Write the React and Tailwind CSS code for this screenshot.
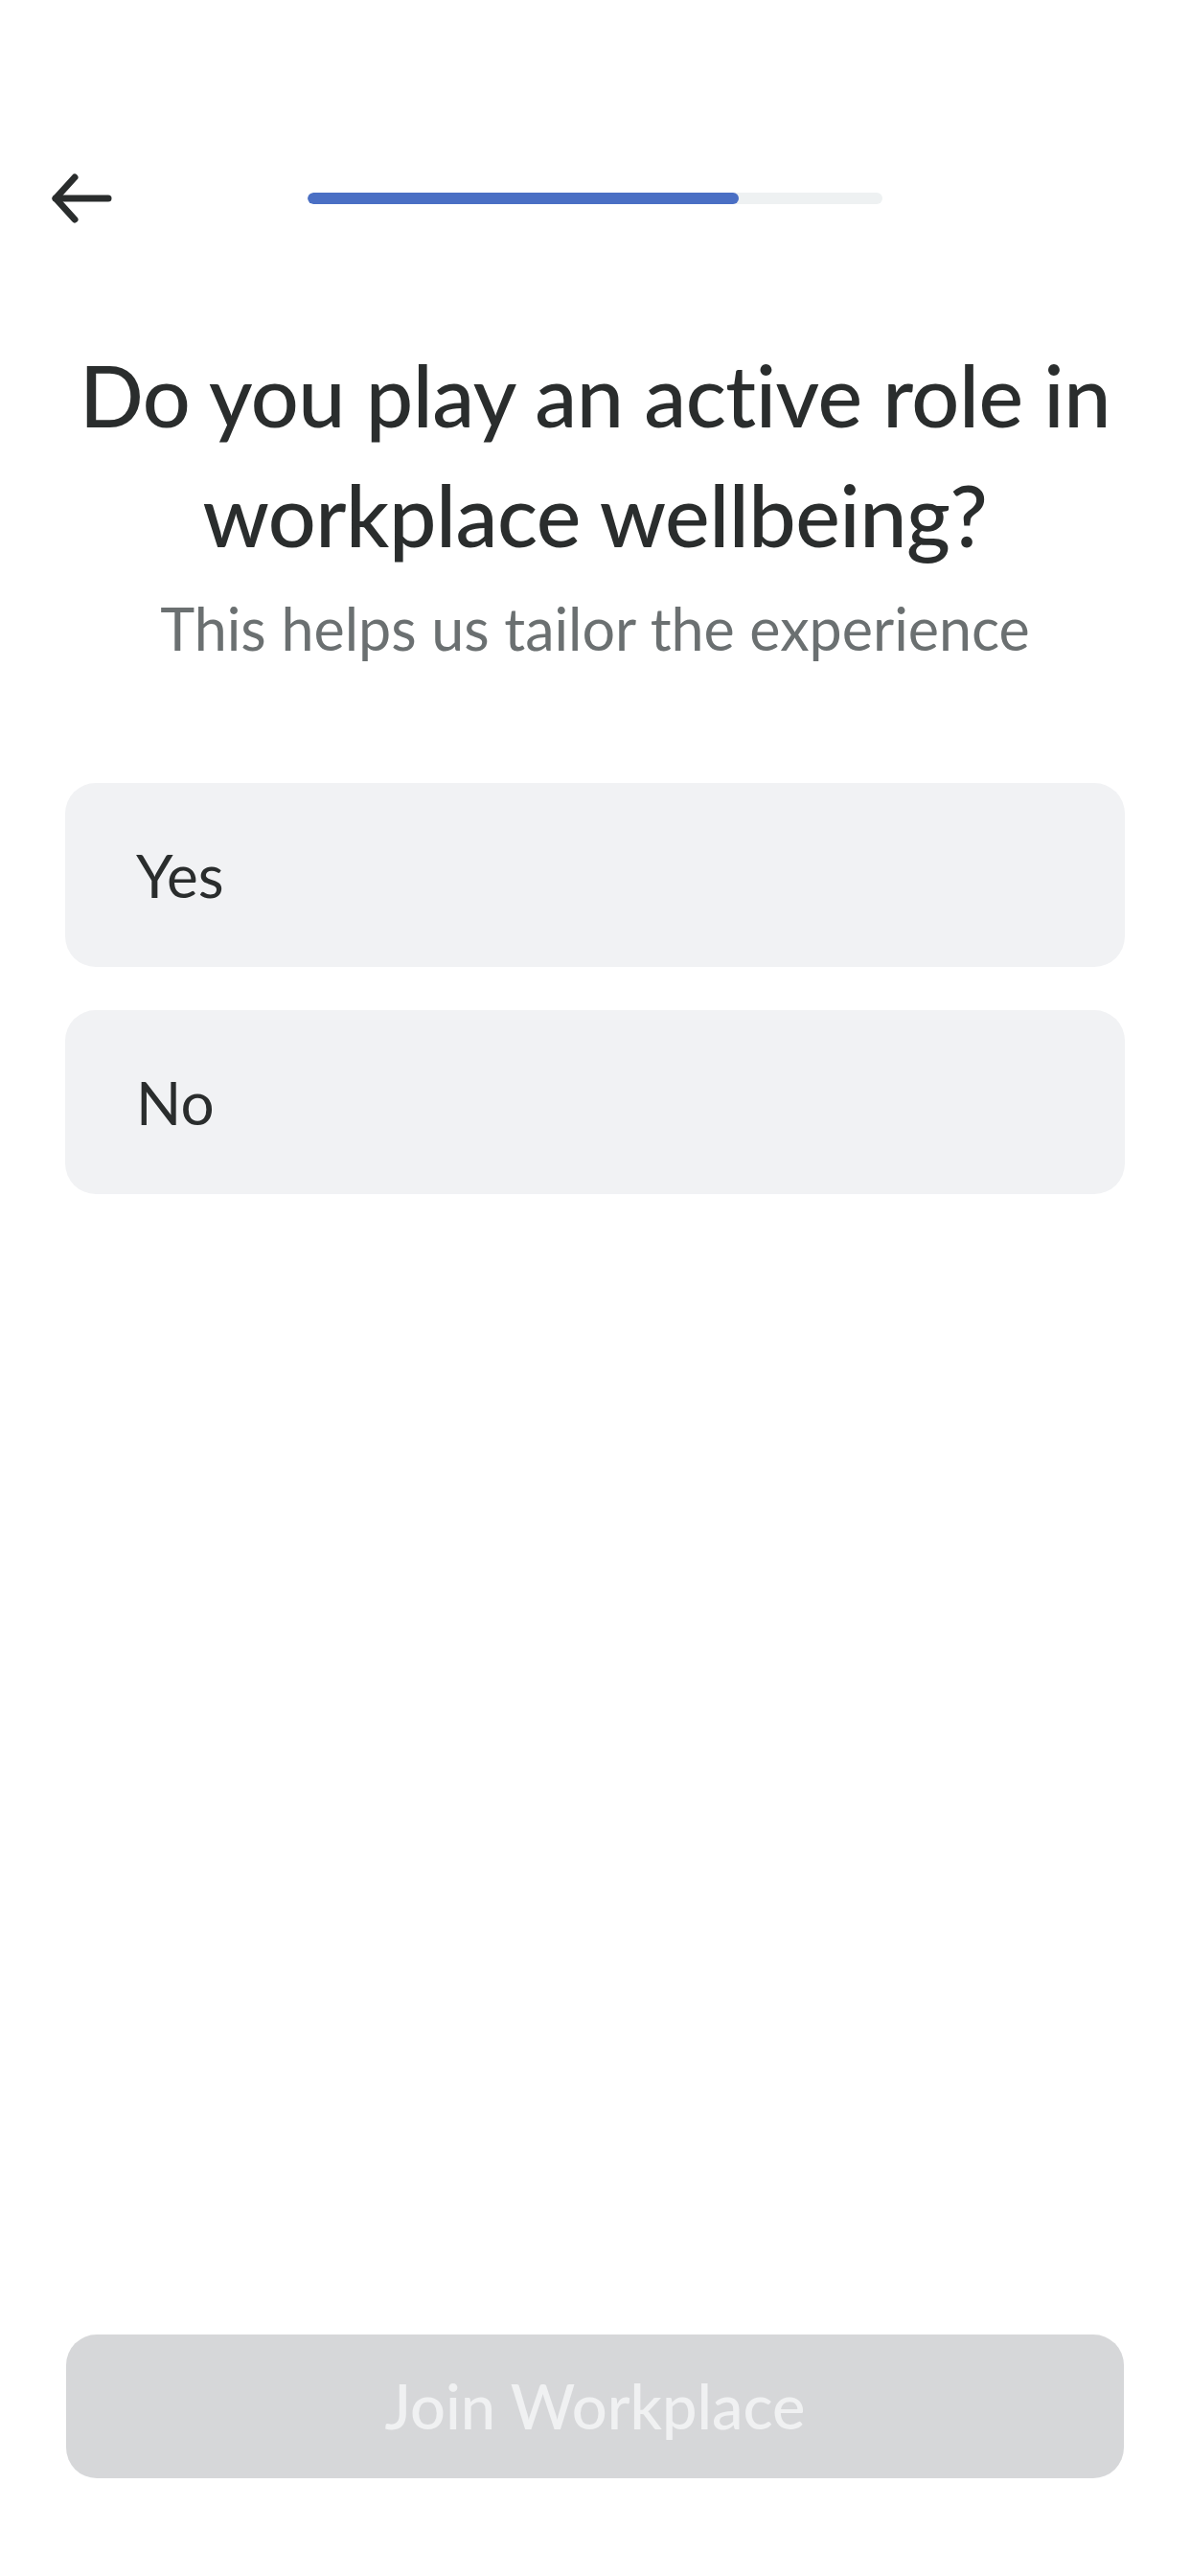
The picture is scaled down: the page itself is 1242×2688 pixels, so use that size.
import { useState } from 'react';

const options = ['Yes', 'No'];

function BackArrow() {
  return (
    <svg width="72" height="54" viewBox="0 0 72 54" fill="none" stroke="#2a2d2d" strokeWidth={7} strokeLinecap="round" strokeLinejoin="round">
      <path d="M30 5L10 27l20 22" />
      <path d="M10 27h55" />
    </svg>
  );
}

export default function App() {
  const [selected, setSelected] = useState(null);

  return (
    <div className="flex flex-col h-[2688px] bg-white text-[#2a2d2d]" style={{ fontFamily: 'Lato, "Open Sans", sans-serif' }}>
      <div className="flex items-center h-[90px] mt-[162px]">
        <div className="w-[321px] pl-[48px]">
          <BackArrow />
        </div>
        <div className="w-[600px] h-[12px] rounded-full bg-[#eef1f2] overflow-hidden">
          <div className="h-full w-[75%] rounded-full bg-[#4a6fc4]" />
        </div>
      </div>

      <h1 className="mt-[98px] px-[40px] text-center text-[88px] leading-[125px] font-medium tracking-[-0.5px]">
        Do you play an active role in workplace wellbeing?
      </h1>
      <p className="mt-[16px] text-center text-[61px] leading-[80px] text-[#6b7071]">
        This helps us tailor the experience
      </p>

      <div className="flex flex-col gap-[45px] mt-[121px] px-[68px]">
        {options.map((opt) => (
          <button
            key={opt}
            onClick={() => setSelected(opt)}
            className={`h-[192px] rounded-[32px] pl-[74px] text-left text-[62px] ${
              selected === opt ? 'bg-[#e4e9f6]' : 'bg-[#f1f2f4]'
            }`}
          >
            {opt}
          </button>
        ))}
      </div>

      <div className="flex-1" />

      <div className="px-[69px] mb-[102px]">
        <button
          disabled={!selected}
          className={`w-full h-[150px] rounded-[32px] text-[65px] font-medium ${
            selected ? 'bg-[#4a6fc4] text-white' : 'bg-[#d6d7d9] text-[#f0f1f2]'
          }`}
        >
          Join Workplace
        </button>
      </div>
    </div>
  );
}
